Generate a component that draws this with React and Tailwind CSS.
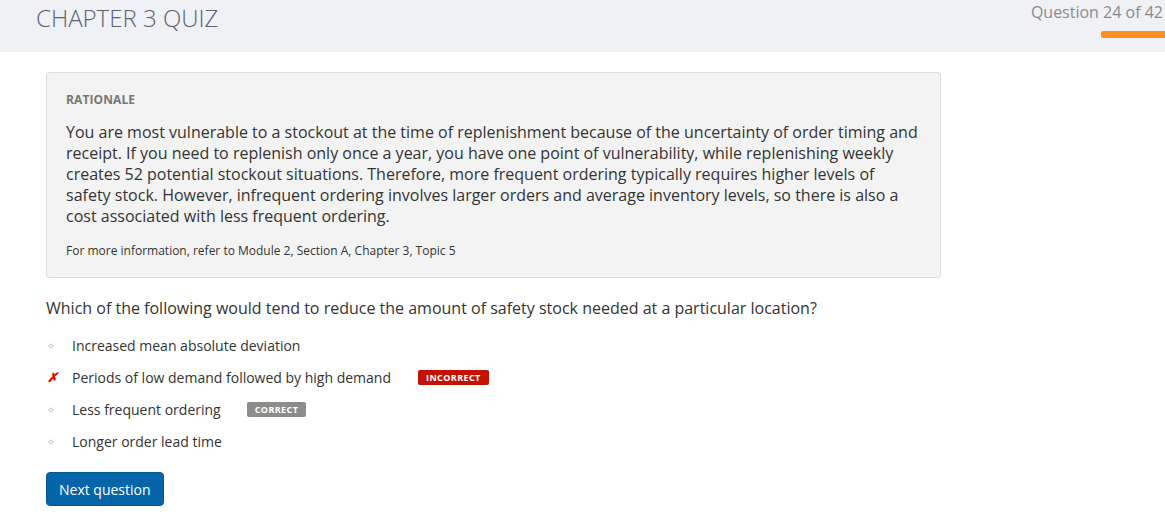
import React from 'react';

const options = [
  { text: 'Increased mean absolute deviation' },
  { text: 'Periods of low demand followed by high demand', wrong: true },
  { text: 'Less frequent ordering', correct: true },
  { text: 'Longer order lead time' },
];

function Bullet({ wrong }) {
  if (wrong) {
    return <span className="w-[26px] text-[13px] font-bold italic text-[#e60000] leading-none pl-[1px]">✗</span>;
  }
  return (
    <span className="w-[26px] flex items-center pl-[3px]">
      <span className="block w-[4px] h-[4px] rotate-45 border border-[#c8c8c8]"></span>
    </span>
  );
}

function App() {
  return (
    <div className="min-h-[521px] bg-white font-['Open_Sans',sans-serif] text-[#333]">
      <div className="h-[52px] bg-[#eff1f5] flex justify-between">
        <h1 className="pl-[36px] text-[24px] font-light text-[#5b6373] leading-[36px]">CHAPTER 3 QUIZ</h1>
        <div className="flex flex-col items-end">
          <div className="text-[16px] text-[#8b8b8b] leading-[24px] pr-[2px]">Question 24 of 42</div>
          <div className="mt-[7px] w-[64px] h-[7px] bg-[#f7931e] rounded-l-[2px]"></div>
        </div>
      </div>

      <div className="pl-[46px] pt-[20px] w-[941px]">
        <div className="bg-[#f3f3f3] border border-[#dcdcdc] rounded-[3px] px-[19px] pt-[18px] pb-[17px]">
          <div className="text-[12px] font-bold text-[#777] leading-[18px] tracking-[0.1px]">RATIONALE</div>
          <p className="mt-[13px] text-[16px] leading-[21px] text-[#333]">
            You are most vulnerable to a stockout at the time of replenishment because of the uncertainty of order timing and
            receipt. If you need to replenish only once a year, you have one point of vulnerability, while replenishing weekly
            creates 52 potential stockout situations. Therefore, more frequent ordering typically requires higher levels of
            safety stock. However, infrequent ordering involves larger orders and average inventory levels, so there is also a
            cost associated with less frequent ordering.
          </p>
          <p className="mt-[15px] text-[12px] leading-[18px] text-[#333]">For more information, refer to Module 2, Section A, Chapter 3, Topic 5</p>
        </div>

        <p className="mt-[18px] text-[16px] leading-[24px]">
          Which of the following would tend to reduce the amount of safety stock needed at a particular location?
        </p>

        <ul className="mt-[15px] flex flex-col gap-[11px]">
          {options.map((o) => (
            <li key={o.text} className="flex items-center h-[21px] text-[14px]">
              <Bullet wrong={o.wrong} />
              <span>{o.text}</span>
              {o.wrong && (
                <span className="ml-[27px] bg-[#c41200] text-white text-[9px] font-bold tracking-[0.4px] px-[8px] h-[15px] leading-[15px] rounded-[2px]">
                  INCORRECT
                </span>
              )}
              {o.correct && (
                <span className="ml-[26px] bg-[#8c8c8c] text-white text-[9px] font-bold tracking-[0.4px] px-[8px] h-[15px] leading-[15px] rounded-[2px]">
                  CORRECT
                </span>
              )}
            </li>
          ))}
        </ul>

        <button className="mt-[20px] bg-[#0565a8] border border-[#04568f] text-white text-[14px] h-[34px] px-[12px] rounded-[4px]">
          Next question
        </button>
      </div>
    </div>
  );
}

export default App;
